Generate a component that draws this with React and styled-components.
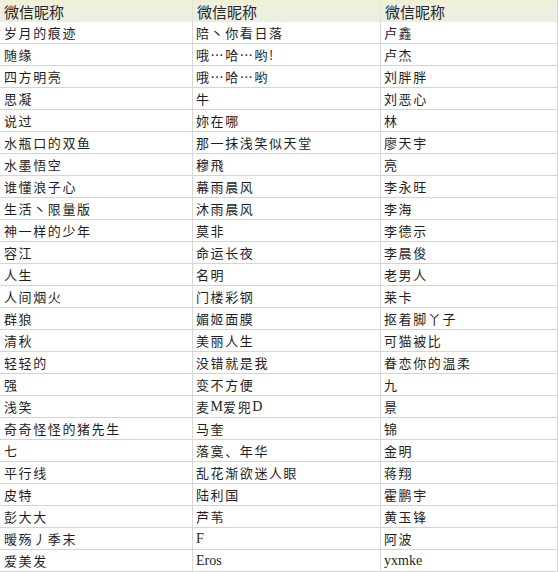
import React from "react";
import styled, { createGlobalStyle } from "styled-components";

const Global = createGlobalStyle`
  html, body { margin: 0; padding: 0; background: #ffffff; }
  body { width: 559px; height: 572px; overflow: hidden; }
`;

const rows = [
  ["岁月的痕迹", "陪丶你看日落", "卢鑫"],
  ["随缘", "哦…哈…哟!", "卢杰"],
  ["四方明亮", "哦…哈…哟", "刘胖胖"],
  ["思凝", "牛", "刘恶心"],
  ["说过", "妳在哪", "林"],
  ["水瓶口的双鱼", "那一抹浅笑似天堂", "廖天宇"],
  ["水墨悟空", "穆飛", "亮"],
  ["谁懂浪子心", "幕雨晨风", "李永旺"],
  ["生活丶限量版", "沐雨晨风", "李海"],
  ["神一样的少年", "莫非", "李德示"],
  ["容江", "命运长夜", "李晨俊"],
  ["人生", "名明", "老男人"],
  ["人间烟火", "门楼彩钢", "莱卡"],
  ["群狼", "媚姬面膜", "抠着脚丫子"],
  ["清秋", "美丽人生", "可猫被比"],
  ["轻轻的", "没错就是我", "眷恋你的温柔"],
  ["强", "变不方便", "九"],
  ["浅笑", "麦M爱兜D", "景"],
  ["奇奇怪怪的猪先生", "马奎", "锦"],
  ["七", "落寞、年华", "金明"],
  ["平行线", "乱花渐欲迷人眼", "蒋翔"],
  ["皮特", "陆利国", "霍鹏宇"],
  ["彭大大", "芦苇", "黄玉锋"],
  ["暧殇丿季末", "F", "阿波"],
  ["爱美发", "Eros", "yxmke"],
];

const Sheet = styled.div`
  width: 557px;
  display: grid;
  grid-template-columns: 192px 188px 177px;
  grid-auto-rows: 22px;
  border-right: 1px solid #d6d6d6;
`;

const HeadCell = styled.div`
  display: flex;
  align-items: center;
  padding-left: 4px;
  height: 22px;
  box-sizing: border-box;
  background: linear-gradient(#f4eec4 0px, #eef0e0 2px, #ecefdf 100%);
  border-left: ${(p) => (p.$first ? "none" : "1px solid #e2e4d4")};
  font-family: "Noto Sans CJK SC", "Noto Sans", sans-serif;
  font-size: 15px;
  color: #262626;
  line-height: 1;
`;

const Cell = styled.div`
  display: flex;
  align-items: center;
  padding-left: ${(p) => (p.$first ? "4px" : "3px")};
  height: 22px;
  box-sizing: border-box;
  border-bottom: 1px solid #d4d4d4;
  border-left: ${(p) => (p.$first ? "none" : "1px solid #d8d8d8")};
  font-family: "Noto Sans CJK SC", "Liberation Serif", sans-serif;
  font-size: 13px;
  letter-spacing: 1.6px;
  color: #1e1e1e;
  white-space: nowrap;
  overflow: hidden;
  line-height: 1;
`;

const Latin = styled.span`
  font-family: "Liberation Serif", serif;
  font-size: 14px;
  letter-spacing: 0;
`;

const renderText = (s) =>
  s.split(/([A-Za-z]+)/).map((part, i) =>
    /^[A-Za-z]+$/.test(part) ? <Latin key={i}>{part}</Latin> : part
  );

export default function App() {
  return (
    <>
      <Global />
      <Sheet>
        {["微信昵称", "微信昵称", "微信昵称"].map((h, i) => (
          <HeadCell key={"h" + i} $first={i === 0}>
            {h}
          </HeadCell>
        ))}
        {rows.map((r, ri) =>
          r.map((c, ci) => (
            <Cell key={ri + "-" + ci} $first={ci === 0}>
              {renderText(c)}
            </Cell>
          ))
        )}
      </Sheet>
    </>
  );
}
